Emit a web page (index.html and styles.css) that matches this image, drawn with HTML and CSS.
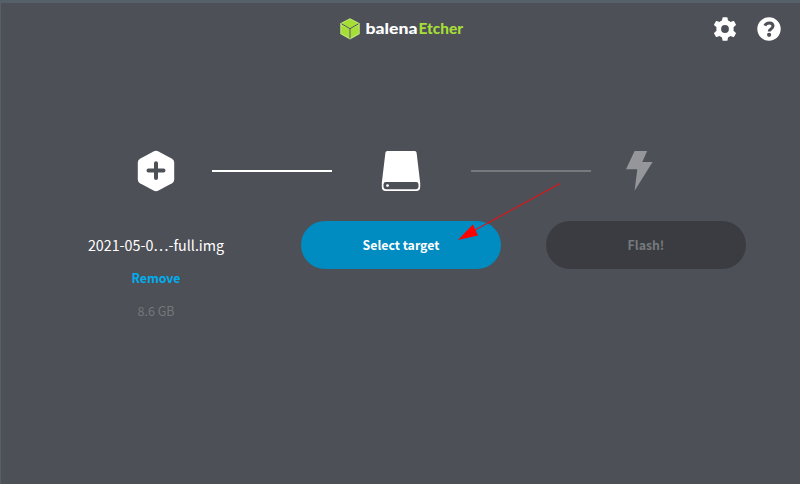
FILE: index.html
```
<!DOCTYPE html>
<html lang="en">
<head>
<meta charset="utf-8">
<title>balenaEtcher</title>
<link rel="stylesheet" href="styles.css">
</head>
<body>
<div class="window">
  <header class="header">
    <svg class="logo" width="126" height="24" viewBox="0 0 126 24" role="img" aria-label="balenaEtcher">
      <path d="M11 1.2 L20.7 6.3 V17 L11 22.5 L1.3 17 V6.3 Z" fill="#c6e982"/>
      <path d="M11 2 L19.2 6.4 L11 11 L2.8 6.4 Z" fill="#a5de37"/>
      <path d="M2.3 8 L10.2 12.3 V20.8 L2.3 16.4 Z M19.7 8 L11.8 12.3 V20.8 L19.7 16.4 Z" fill="#a5de37"/>
      <path d="M2.5 6.8 L11 11.7 L19.5 6.8 M11 11.7 V21.5" fill="none" stroke="#45513b" stroke-width="1"/>
      <text class="word balena" x="26.5" y="17" textLength="52" lengthAdjust="spacingAndGlyphs">balena</text>
      <text class="word etcher" x="79.5" y="17" textLength="44.5" lengthAdjust="spacingAndGlyphs">Etcher</text>
    </svg>
    <div class="tools">
      <svg width="24" height="24" viewBox="0 0 24 24">
        <path fill="#fff" fill-rule="evenodd" d="M9.5 .7Q9.6 .2 10.2 .2H13.8Q14.4 .2 14.5 .7L15 3.6Q16.3 4.1 17.4 5L20.2 4Q20.8 3.8 21.1 4.3L22.9 7.4Q23.2 7.9 22.7 8.3L20.5 10.3Q20.8 12 20.5 13.7L22.7 15.7Q23.2 16.1 22.9 16.6L21.1 19.7Q20.8 20.2 20.2 20L17.4 19Q16.3 19.9 15 20.4L14.5 23.3Q14.4 23.8 13.8 23.8H10.2Q9.6 23.8 9.5 23.3L9 20.4Q7.7 19.9 6.6 19L3.8 20Q3.2 20.2 2.9 19.7L1.1 16.6Q.8 16.1 1.3 15.7L3.5 13.7Q3.2 12 3.5 10.3L1.3 8.3Q.8 7.9 1.1 7.4L2.9 4.3Q3.2 3.8 3.8 4L6.6 5Q7.7 4.1 9 3.6ZM12 8.1A3.9 3.9 0 1 0 12 15.9A3.9 3.9 0 1 0 12 8.1Z"/>
      </svg>
      <svg width="24" height="24" viewBox="0 0 24 24">
        <circle cx="12" cy="12" r="11.7" fill="#fff"/>
        <path d="M7.8 8.7C9.6 5 16 5.2 16 9.1C16 12 12.2 11.8 12.2 14.5" fill="none" stroke="#4d5057" stroke-width="3"/>
        <circle cx="12.1" cy="17.8" r="2.1" fill="#4d5057"/>
      </svg>
    </div>
  </header>
  <main>
    <div class="steps">
      <svg width="38" height="42" viewBox="0 0 38 42">
        <path d="M16.5 1.5Q19 .2 21.5 1.5L35 8.8Q37.2 10 37.2 12.6V29.4Q37.2 32 35 33.2L21.5 40.5Q19 41.8 16.5 40.5L3 33.2Q.8 32 .8 29.4V12.6Q.8 10 3 8.8Z" fill="#fff"/>
        <path d="M19 13.2V28M11.5 20.6H26.5" stroke="#4d5057" stroke-width="4" stroke-linecap="round"/>
      </svg>
      <i class="line"></i>
      <svg width="40" height="42" viewBox="0 0 40 42">
        <path d="M6.3 1H33.7Q35.4 1 35.6 2.7L39.2 33V37Q39.2 41 35.2 41H4.8Q.8 41 .8 37V33L4.4 2.7Q4.6 1 6.3 1Z" fill="#fff"/>
        <rect x="2.5" y="32" width="35" height="7.2" rx="2.4" fill="#4d5057"/>
        <circle cx="6.5" cy="35.6" r="1.4" fill="#fff"/>
      </svg>
      <i class="line pending"></i>
      <svg width="28" height="42" viewBox="0 0 28 42">
        <path d="M8.6 1H21.1L16.3 12H26.6L8.6 40.8L11.3 19.2H0Z" fill="#949699"/>
      </svg>
    </div>
    <div class="columns">
      <section class="image">
        <div class="name">2021-05-0…-full.img</div>
        <div class="remove">Remove</div>
        <div class="size">8.6 GB</div>
      </section>
      <button class="button">Select target</button>
      <button class="button disabled" disabled>Flash!</button>
    </div>
  </main>
  <svg class="arrow" width="110" height="64" viewBox="0 0 110 64">
    <path d="M105 5.5L20 52" stroke="#e01519" stroke-width="1.1"/>
    <path d="M3 62L17.8 46.5L23 57.6Z" fill="#f00"/>
  </svg>
</div>
</body>
</html>
```
FILE: styles.css
```
* { box-sizing: border-box; }
body {
  margin: 0;
  background: #4d5057;
  font-family: "Source Sans Pro", "Noto Sans CJK JP", sans-serif;
}
.window {
  position: relative;
  height: 484px;
  overflow: hidden;
  border-top: 3px solid #546169;
  border-left: 1px solid #566067;
}
svg { display: block; flex: none; }
.header {
  display: flex;
  justify-content: space-between;
  padding: 14px 19px 0 338px;
}
.word { font-family: Lato, sans-serif; font-size: 14.5px; font-weight: 900; }
.balena { fill: #fff; }
.etcher { fill: #a5de37; }
.tools { display: flex; gap: 20px; }
.steps {
  display: flex;
  align-items: center;
  margin: 109px 0 0 136px;
}
.line { width: 120px; height: 2px; margin: 0 49px 0 37px; background: #fff; }
.line.pending { margin: 0 35px 0 50px; background: #777a7d; }
.columns {
  display: grid;
  grid-template-columns: repeat(3, 200px);
  gap: 45px;
  margin: 29px 0 0 55px;
}
.image { text-align: center; }
.name { height: 47px; line-height: 48px; font-size: 14.3px; color: #fff; }
.remove { height: 20px; line-height: 20px; font-size: 12.3px; font-weight: 700; color: #00aeef; }
.size { height: 20px; margin-top: 13px; line-height: 20px; font-size: 12.5px; color: #75777b; }
.button {
  height: 48px;
  padding: 0;
  border: 0;
  border-radius: 24px;
  background: #008bc1;
  color: #fff;
  font: 700 12.3px/48px "Source Sans Pro", "Noto Sans CJK JP", sans-serif;
}
.button.disabled { background: #3a3c41; color: #757a7d; }
.arrow { position: absolute; left: 454px; top: 175px; }
```
